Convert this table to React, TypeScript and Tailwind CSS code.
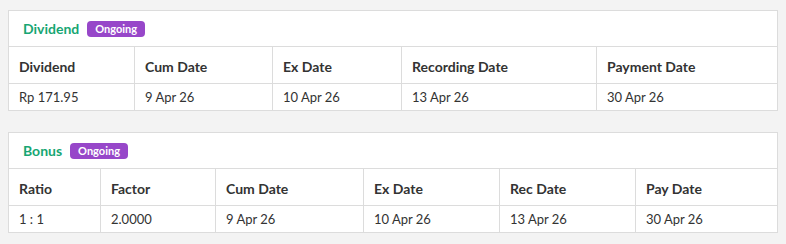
import React from "react";

const font = { fontFamily: "Lato, 'Open Sans', sans-serif" };

function Card({
  title,
  cols,
  headers,
  values,
}: {
  title: string;
  cols: string;
  headers: string[];
  values: string[];
}) {
  return (
    <div className="border border-[#dcdcdc] bg-white">
      <div className="flex h-[36px] items-center gap-[8px] border-b border-[#dcdcdc] pl-[14px]">
        <span className="text-[14px] font-bold text-[#17a673]">{title}</span>
        <span className="rounded-[4px] bg-[#9747c9] px-[8px] text-[11px] font-bold leading-[16px] text-white">
          Ongoing
        </span>
      </div>
      <div className={`grid ${cols}`}>
        {headers.map((h, i) => (
          <div
            key={h}
            className={`flex h-[37px] items-center border-b border-[#dcdcdc] pl-[10px] pt-[2px] text-[14px] font-bold text-[#333] ${
              i > 0 ? "border-l" : ""
            }`}
          >
            {h}
          </div>
        ))}
        {values.map((v, i) => (
          <div
            key={i}
            className={`flex h-[26px] items-center border-[#dcdcdc] pl-[10px] pt-[1px] text-[13px] text-[#333] ${
              i > 0 ? "border-l" : ""
            }`}
          >
            {v}
          </div>
        ))}
      </div>
    </div>
  );
}

export default function App() {
  return (
    <div className="min-h-[244px] bg-[#f3f3f3] px-[8px] pt-[10px]" style={font}>
      <div className="flex flex-col gap-[21px]">
        <Card
          title="Dividend"
          cols="grid-cols-[125px_138px_129px_195px_1fr]"
          headers={["Dividend", "Cum Date", "Ex Date", "Recording Date", "Payment Date"]}
          values={["Rp 171.95", "9 Apr 26", "10 Apr 26", "13 Apr 26", "30 Apr 26"]}
        />
        <Card
          title="Bonus"
          cols="grid-cols-[91px_115px_148px_136px_136px_1fr]"
          headers={["Ratio", "Factor", "Cum Date", "Ex Date", "Rec Date", "Pay Date"]}
          values={["1 : 1", "2.0000", "9 Apr 26", "10 Apr 26", "13 Apr 26", "30 Apr 26"]}
        />
      </div>
    </div>
  );
}
